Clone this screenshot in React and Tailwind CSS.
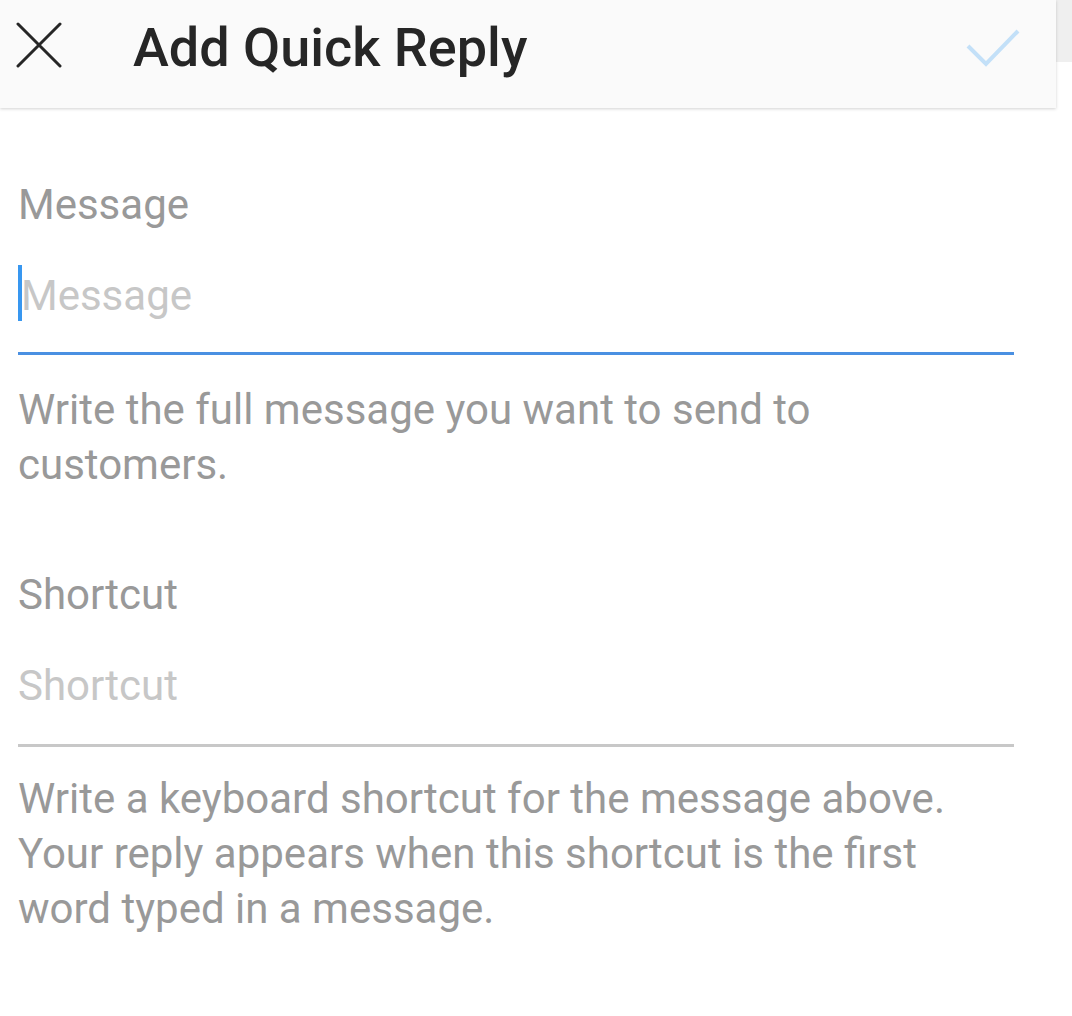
import React from 'react';

const CloseIcon = () => (
  <svg width="48" height="48" viewBox="0 0 48 48" className="shrink-0">
    <path d="M3 2 L45 44 M45 2 L3 44" stroke="#262626" strokeWidth="3" strokeLinecap="round" fill="none" />
  </svg>
);

const CheckIcon = () => (
  <svg width="56" height="40" viewBox="0 0 56 40" className="shrink-0">
    <path d="M3 17 L21 35 L53 2" stroke="#c3e0f8" strokeWidth="4" fill="none" />
  </svg>
);

const Field = ({ label, placeholder, active, helper }) => (
  <div className="flex flex-col">
    <div className="text-[42px] leading-[55px] text-[#999999]">{label}</div>
    {active ? (
      <div className="mt-[33px] w-[996px] flex items-start pb-[25px] border-b-[3px] border-[#4a90e2]">
        <span className="w-[4px] h-[56px] bg-[#3897f0]" />
        <span className="text-[42px] leading-[62px] text-[#c7c7c7] -ml-[1px]">{placeholder}</span>
      </div>
    ) : (
      <div className="mt-[36px] w-[996px] pb-[30px] border-b-[3px] border-[#c8c8c8]">
        <span className="block text-[42px] leading-[56px] text-[#c7c7c7]">{placeholder}</span>
      </div>
    )}
    <p className={`${active ? 'mt-[27px]' : 'mt-[24px]'} text-[42px] leading-[55px] text-[#999999] whitespace-nowrap`}>
      {helper.map((line, i) => (
        <React.Fragment key={i}>
          {line}
          {i < helper.length - 1 && <br />}
        </React.Fragment>
      ))}
    </p>
  </div>
);

export default function App() {
  return (
    <div className="w-[1072px] h-[1016px] bg-white overflow-hidden" style={{ fontFamily: 'Roboto, "Noto Sans", sans-serif' }}>
      <div className="flex items-start">
        <header className="w-[1056px] h-[108px] bg-[#fafafa] flex items-start shadow-[0_1px_3px_rgba(0,0,0,0.18)] relative z-10">
          <div className="ml-[15px] mt-[22px]">
            <CloseIcon />
          </div>
          <h1 className="ml-[70px] mt-[16px] text-[54px] leading-[64px] font-medium text-[#262626]">
            Add Quick Reply
          </h1>
          <div className="ml-auto mr-[35px] mt-[29px]">
            <CheckIcon />
          </div>
        </header>
        <div className="w-[16px] h-[62px] bg-[#efefef]" />
      </div>

      <main className="pl-[18px] pt-[69px]">
        <Field
          label="Message"
          placeholder="Message"
          active
          helper={["Write the full message you want to send to", "customers."]}
        />
        <div className="mt-[75px]">
          <Field
            label="Shortcut"
            placeholder="Shortcut"
            helper={[
              "Write a keyboard shortcut for the message above.",
              "Your reply appears when this shortcut is the first",
              "word typed in a message.",
            ]}
          />
        </div>
      </main>
    </div>
  );
}
